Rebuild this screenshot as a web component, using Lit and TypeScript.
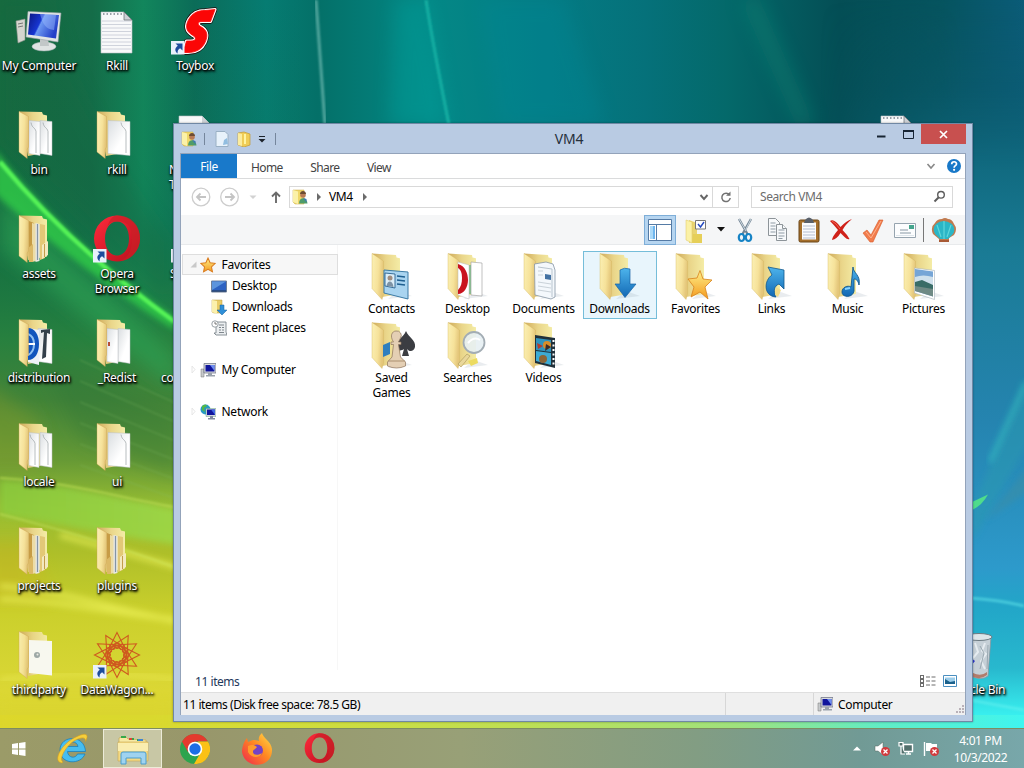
import { LitElement, html, svg, css } from "lit";
import { customElement, property } from "lit/decorators.js";

/* ---------- shared glyphs ---------- */

const arrowOverlay = svg`
  <rect x="0" y="34" width="13.5" height="13.5" fill="#e9f1fb"/>
  <path d="M4.5 36.5h7v7l-2.4-2.3c-2 1.2-2.700 2.600-2.500 5.300-2.800-2.200-3.300-5.500.2-7.800z" fill="#1d4c9c"/>`;

const gradients = svg`
  <defs>
    <linearGradient id="cover" x1="0" y1="0" x2="1" y2=".25"><stop offset="0" stop-color="#fbf0b4"/><stop offset=".6" stop-color="#f6e29a"/><stop offset="1" stop-color="#e4c67a"/></linearGradient>
    <linearGradient id="back" x1="0" y1="0" x2="1" y2="0"><stop offset="0" stop-color="#cfab5c"/><stop offset=".5" stop-color="#ead68a"/><stop offset="1" stop-color="#f4eca6"/></linearGradient>
    <linearGradient id="paper" x1="0" y1="0" x2="1" y2="1"><stop offset="0" stop-color="#d9dde0"/><stop offset=".6" stop-color="#ffffff"/></linearGradient>
    <linearGradient id="blue" x1="0" y1="0" x2="0" y2="1"><stop offset="0" stop-color="#4db4ec"/><stop offset="1" stop-color="#1268b4"/></linearGradient>
    <linearGradient id="gold" x1="0" y1="0" x2="0" y2="1"><stop offset="0" stop-color="#fff08a"/><stop offset="1" stop-color="#f39a1e"/></linearGradient>
    <linearGradient id="screen" x1="0" y1="0" x2="1" y2=".4"><stop offset="0" stop-color="#0a1680"/><stop offset=".45" stop-color="#1636d2"/><stop offset=".5" stop-color="#6c98f2"/><stop offset="1" stop-color="#2440c8"/></linearGradient>
    <linearGradient id="red" x1="0" y1="0" x2="1" y2="1"><stop offset="0" stop-color="#ff2a3c"/><stop offset="1" stop-color="#b8101c"/></linearGradient>
  </defs>`;

const icon = (size: number, body: unknown, box = 48) => html`
  <svg width=${size} height=${size} viewBox="0 0 ${box} ${box}">${gradients}${body}</svg>`;

/* Half-open folder: back panel, contents, then the cover in front. */
const openFolder = (inside: unknown) => svg`
  <path d="M4 .5 27 1l1 2.500 4 1v37L13 45z" fill="url(#back)"/>
  ${inside}
  <path d="M4 .5 13.500 5.500V36l-1.300 2v9.500L4 41z" fill="url(#cover)" stroke="#cda552" stroke-width=".4"/>`;

const libFolder = (inside: unknown) => svg`
  <path d="M30 38 44 43 20 46z" fill="#8fa0b0" opacity=".2"/>
  <path d="M4 .5 28 2l.5 2.500 3.500.8V41L14 44z" fill="url(#back)"/>
  <path d="M4 .5 15.500 8v33l-1.500 5.500L4 35.500z" fill="url(#cover)" stroke="#d5b55e" stroke-width=".4"/>
  ${inside}`;

const sheet = (x: number, right: number, fold = true) => svg`
  <path d="M${x} 9.500 L${right} 10.500V44.500L${x} 42.500z" fill="url(#paper)" stroke="#b9bfc2" stroke-width=".5"/>
  ${fold ? svg`<path d="M${right - 9} 11.500c1 6 4 4.500 5 9V42" fill="none" stroke="#9aa1a4" stroke-width=".7"/>` : null}`;

const files = svg`<path d="M14 6l5 2v38l-5 1z" fill="#c79c46"/><path d="M17 8l4 1v37l-4 1z" fill="#ecdca6"/><path d="M20.500 8l4 1v37l-4 1z" fill="#e6e6e2"/><path d="M22.500 9v36" stroke="#8494a6" stroke-width="1.200"/><path d="M25 9l5 1v33l-5 2z" fill="#e3c877"/><path d="M27 30l6-4v14l-6 4z" fill="#f3e9c0"/><path d="M29.500 29v13" stroke="#c29c4a"/><path d="M13 33l5-4v18h-4z" fill="#dcb967"/>`;

const star = "M12 1.500 15.200 8.600 22.800 9.500 17.200 14.700 18.700 22.300 12 18.500 5.300 22.300 6.800 14.700 1.200 9.500 8.800 8.600z";
const swoosh = "M44 2.500 39.500 14.500H31C26.500 14.500 26 17.500 29.500 19.500C37 23.500 37 29 34 35.500C31 42 25 45.500 17 45.500H12L15.500 34H20C25 34 26 31 22 28.500C14 24 14.500 18 18 12C21.500 6 27 3.500 34 3.500z";

const art: Record<string, unknown> = {
  computer: svg`
    <path d="M1 14 10 12v21L3 36z" fill="#d5d6cf" stroke="#8d908a" stroke-width=".6"/><path d="M3 17l5-1M3 20l5-1" stroke="#777"/>
    <ellipse cx="29" cy="39.500" rx="12" ry="4.500" fill="#dfe3e3" stroke="#9aa" stroke-width=".5"/><path d="M25 31h8l1 8h-9z" fill="#c2c7c8"/>
    <path d="M13 4.500 46 6 43 35 11 30z" fill="#e2e5e5" stroke="#98a1a6" stroke-width=".6"/><path d="M15 6.500 44 8 41 31.500 13 27.500z" fill="url(#screen)"/><path d="M25 7l16 1-2 15c-8-1-11-5-14-16z" fill="#9dbcff" opacity=".45"/>`,
  notepad: svg`
    <path d="M8 5H31L39 13V46H8z" fill="#f8f9fa" stroke="#b8bdc2" stroke-width=".6"/>
    ${[14, 17.500, 21, 24.500, 28, 31.500, 35, 38.500, 42].map(y => svg`<path d="M9 ${y}H38" stroke="#c4c9d4" stroke-width=".8"/>`)}
    <path d="M31 5v8h8z" fill="#cdd1d6" stroke="#62676d" stroke-width=".7"/><path d="M10 7h20" stroke="#9aa0a8" stroke-width="2" stroke-dasharray="1.500 2"/>`,
  plain: svg`<path d="M8 5H31L39 13V46H8z" fill="#f8f9fa" stroke="#b8bdc2" stroke-width=".6"/><path d="M31 5v8h8z" fill="#cdd1d6"/>`,
  toybox: svg`
    <g stroke-linejoin="round"><path d=${swoosh} fill="#1c0606" stroke="#1c0606" stroke-width="4.500"/>
    <path d=${swoosh} fill="#fff" stroke="#fff" stroke-width="3.200"/><path d=${swoosh} fill="#fb0606" stroke="#fb0606" stroke-width=".8"/></g>`,
  bin: openFolder(svg`${sheet(25, 37)}${sheet(14, 25)}`),
  doc: openFolder(sheet(15, 37)),
  assets: openFolder(files),
  opera: svg`<g transform="translate(0,-.5)"><path fill-rule="evenodd" d="M24 1a23 23 0 1 1 0 46a23 23 0 0 1 0-46zm0 6c-7 0-12 7-12 17s5 17 12 17 12-7 12-17S31 7 24 7z" fill="url(#red)"/><path d="M24 1c15 0 23 10 23 23S37 47 24 47c9-1 15-9 15-23S33 7 24 7c-5 0-8 2-10 6C17 4 20 1 24 1z" fill="#ca2026" opacity=".65"/></g>`,
  dist: openFolder(svg`${sheet(23, 37, false)}<path d="M26 11l9-1v5l-3-1-1 24-4 2 2-27-3 1z" fill="#34404a"/><path d="M13 9l11 2v35l-11-3z" fill="#eef2f6"/><path d="M13 9c7 0 11 7 11 16s-4 16-11 16z" fill="#1155bd"/><path d="M13 15c8 3 8 17 0 21" fill="none" stroke="#8fc0f2" stroke-width="2"/><path d="M13 25h7" stroke="#fff" stroke-width="2"/>`),
  redist: openFolder(svg`${sheet(25, 37, false)}${sheet(14, 25, false)}<path d="M15 23h2v4h-2z" fill="#b54d3a"/>`),
  locale: openFolder(svg`${sheet(25, 37)}${sheet(14, 24)}`),
  third: svg`<g opacity=".95">${openFolder(svg`<path d="M14 9 37 10V44.500L14 42z" fill="#fafafa"/><circle cx="22" cy="24" r="3" fill="#9ba6ac"/><circle cx="22.500" cy="23.500" r="1" fill="#eee"/>`)}</g>`,
  data: svg`<g fill="none" stroke="#cf5a20" stroke-width="1.100">
    ${Array.from({ length: 12 }, (_, i) => svg`<path transform="rotate(${i * 30} 24 24)" d="M24 1.500 32 17.500 24 14 16 17.500zM24 14 28.500 19"/>`)}
    ${Array.from({ length: 12 }, (_, i) => svg`<circle transform="rotate(${i * 30} 24 24)" cx="24" cy="14.500" r="2.600"/>`)}
    <circle cx="24" cy="24" r="7" stroke-dasharray="2 1.500"/></g>`,
  recycle: svg`<path d="M16 6 40 5 37 45Q30 50 20 45z" fill="#c6d0d7" stroke="#8a979f" stroke-width=".8"/><ellipse cx="28" cy="6" rx="13" ry="3.500" fill="#dde5e9" stroke="#6c7a82"/><path d="M34 12l-3 8 4 3-5 7 4 8M24 12l3 9-5 6" stroke="#eef3f6" stroke-width="2" fill="none" opacity=".8"/><path d="M37 14l-1 24M29 15l4 7-4 16" stroke="#9aa8b1" fill="none"/><path d="M22 42q8 4 14-1v3q-6 5-14 2z" fill="#b27c6c"/><path d="M16 24l8 6-5 6z" fill="#2c35cf"/>`,
  contacts: libFolder(svg`<path d="M16 17 40 19V46L16 40z" fill="#a9d4f0" stroke="#3c7ba5" stroke-width="1"/><path d="M17 20l10 1v14l-10-2z" fill="#dceef8" stroke="#28618e" stroke-width=".9"/><circle cx="22" cy="25" r="2.500" fill="#a08d80"/><path d="M18.500 33c1-6 6-6 7 1z" fill="#7d93a6"/><path d="M29 23l8 1M29 27l8 1M29 31l8 1" stroke="#1f5f90" stroke-width="1.300"/>`),
  desktop: libFolder(svg`<path d="M27 9l11 1v33l-11-1z" fill="#fff" stroke="#999" stroke-width=".6"/><path d="M14 9l11 3v34l-11-4z" fill="#fff" stroke="#b9bdbf" stroke-width=".5"/><path d="M14 11c7 2 10 9 10 16s-4 14-10 14v-4c3-3 4-7 4-12S17 17 14 15z" fill="#c9131e"/><path d="M26 12v29" stroke="#43a38c"/>`),
  documents: libFolder(svg`<path d="M14.500 11 26 9l7 2 2 6v27l-4 2-16-4z" fill="#f4f8fc" stroke="#8796a5" stroke-width=".8"/><path d="M18 14l14 2v28" fill="none" stroke="#b8c4ce"/><path d="M25 21l6 1v5l-6-1z" fill="#4472a3"/><path d="M18 18h5M18 22h5M18 29l13 2M18 33l13 2M18 37l13 2" stroke="#cad2d9"/>`),
  downloads: libFolder(svg`<path d="M24 17q4-3 10-1v15h6L29 44.500 19 31h5z" fill="url(#blue)" stroke="#1863a5" stroke-width=".7"/>`),
  favorites: libFolder(svg`<path d="M28 17.500 31 26l9 1-7 7 3 12-8-7-9 5 3-10-6-8 9-1z" fill="url(#gold)" stroke="#d8821c" stroke-width=".8"/>`),
  links: libFolder(svg`<path d="M20 14 36 17V36L31 31C26 33 25 38 28 44 15 43 16 27 24 22z" fill="url(#blue)" stroke="#10588d" stroke-width=".8"/><path d="M27 42l1-8 5 3-3 7z" fill="#f2dc88"/>`),
  music: libFolder(svg`<path d="M29 14c0 6 8 8 6 18-1-5-3-6-5-6v12c-1 7-12 7-12 1 0-5 6-7 9-5z" fill="url(#blue)" stroke="#10588d" stroke-width=".9"/><path d="M21 36l5-1" stroke="#8ad4ff" stroke-width="2"/>`),
  pictures: libFolder(svg`<path d="M14.500 15l20 2.500v29L14.500 40z" fill="#fff" stroke="#a5b2ba" stroke-width=".6"/><path d="M15 16l18 2.500v25L15 38z" fill="#76a5d6"/><path d="M15 24q8-3 18 0v9l-18-2z" fill="#cfe0ec"/><path d="M15 29l7-2 11 5v6l-18-3z" fill="#396c67"/><path d="M15 33l18 3v7.500L15 38z" fill="#6f8a85"/>`),
  games: libFolder(svg`<path d="M15 23l7-3v12l-7 3z" fill="#2f7fbe"/><path d="M38 9c3 7 10 9 9 16-1 5-6 5-8 2l2 7h-7l2-7c-4 3-8 1-8-3 0-6 7-8 10-15z" fill="#3b3d42"/><path d="M28 9a4.500 4.500 0 0 1 4.500 7l-2 4h2.500v2.500h-2.500l2 12.500 5 5v4q-9 4-18 0v-4l4.500-5 1.500-12.500H23V20h2.500C21.500 14 24 9 28 9z" fill="#e4cfb4" stroke="#8c735b" stroke-width=".7"/><path d="M20 39h17" stroke="#ab9070"/>`),
  searches: libFolder(svg`<path d="M14 42l9-10 3 2-9 11z" fill="#e9d79a" stroke="#a99558" stroke-width=".6"/><path d="M24 39l9-3 1 5-7 3z" fill="#ecdb60"/><circle cx="30" cy="20.500" r="10.500" fill="#e7f0f3" fill-opacity=".9" stroke="#a3adb4" stroke-width="1.800"/><path d="M24 21q6-7 12-3" stroke="#fff" stroke-width="2" fill="none"/>`),
  videos: libFolder(svg`<path d="M15 13l20 3v30l-20-5z" fill="#20303a"/><path d="M16 16l15 2v12l-15-2z" fill="#2f93bd"/><path d="M16 29l15 2v12l-15-4z" fill="#3cabd4"/><circle cx="27" cy="23" r="4" fill="#d98c28"/><path d="M17 21l6 3-5 3z" fill="#b13d31"/><circle cx="23" cy="37" r="4" fill="#8a6538"/><path d="M26 22l5 3-6 4z" fill="#3a2c2a"/><path d="M33.500 18v26" stroke="#fff" stroke-width="2" stroke-dasharray="2 2.500"/>`),
};

const miniPc = svg`<path d="M1 7h3v8H1z" fill="#c7cacc" stroke="#777" stroke-width=".5"/><path d="M4 1.500h12v9.500H4z" fill="#d9dbdd" stroke="#666b80" stroke-width=".7"/><path d="M5.500 3h9v6.500h-9z" fill="#10159c"/><path d="M10 3h4.500v6z" fill="#6d8df0"/><path d="M8 11h4v2h3v1.500H6V13h2z" fill="#9aa2ac"/>`;
const userFolder = svg`<path d="M1 1h11v14H3L1 13z" fill="#efd768" stroke="#c9a744" stroke-width=".5"/><path d="M1 1l5 1.500V15l-5-2z" fill="#fbf1a8"/><circle cx="11" cy="6" r="2.800" fill="#b97b55"/><path d="M8 5c0-4 6-4 6 0z" fill="#6d4c33"/><path d="M7 14.500c0-7 8-7 8.500 0z" fill="#4e9c6b"/><path d="M11 9l3.500 1v3.500z" fill="#3e79b3"/>`;

const mini: Record<string, unknown> = {
  star: svg`<g transform="scale(.667)"><path d=${star} fill="url(#gold)" stroke="#d97a1c" stroke-width="1.500"/></g>`,
  desktop: svg`<path d="M.5 3h15v11H.5z" fill="#2d62c2" stroke="#6f7f98"/><path d="M1 3.500h14L1 12z" fill="#5c94dd"/><path d="M1 13h14" stroke="#26384f"/>`,
  downloads: svg`<path d="M1 1h10v13H3l-2-1z" fill="#e9cc66" stroke="#b9993f" stroke-width=".5"/><path d="M1 1l5 1v13l-5-2z" fill="#fbf0ac"/><path d="M9 6h4v5h3l-5 5-5-5h3z" fill="#2f8fd8" stroke="#17629f" stroke-width=".5"/>`,
  recent: svg`<path d="M5 2h10v10l1 3H5l-2-2h2z" fill="#eceff1" stroke="#7e868c" stroke-width=".9"/><path d="M8 5h5M8 7.500h2m1 0h2M8 10h2m1 0h2M8 12.500h5" stroke="#7e868c"/><circle cx="4" cy="4" r="3.200" fill="#fff" stroke="#8d969c" stroke-width=".9"/><path d="M4 2v2h2" stroke="#555" fill="none" stroke-width=".8"/>`,
  pc: miniPc,
  net: svg`<circle cx="5.500" cy="5.500" r="5" fill="#2799c4"/><path d="M2 2q4-3 5 0l-3 2 1 4-3-2z" fill="#54b846"/><path d="M6 4.500h10v8H6z" fill="#d3d6e0" stroke="#596" stroke-width=".4"/><path d="M7 5.500h8V11H7z" fill="#10159c"/><path d="M11 5.500h4V11z" fill="#4167e4"/><path d="M10 12h3v2h2v1.500H8V14h2z" fill="#818aa0"/>`,
  user: userFolder,
};

/* ---------- wallpaper ---------- */

@customElement("aurora-wallpaper")
class AuroraWallpaper extends LitElement {
  static styles = css`:host { display: block; } svg { display: block; }`;
  render() {
    return html`<svg width="1024" height="768" viewBox="0 0 1024 768" preserveAspectRatio="none">
      <defs>
        <linearGradient id="sky"><stop offset="0" stop-color="#166b3f"/><stop offset=".09" stop-color="#146c48"/><stop offset=".14" stop-color="#12865c"/><stop offset=".19" stop-color="#0b6c58"/><stop offset=".26" stop-color="#067c72"/><stop offset=".31" stop-color="#047068"/><stop offset=".42" stop-color="#048886"/><stop offset=".53" stop-color="#047c84"/><stop offset=".63" stop-color="#05717a"/><stop offset=".71" stop-color="#04696a"/><stop offset=".82" stop-color="#044e55"/><stop offset=".92" stop-color="#06545f"/><stop offset="1" stop-color="#0b5c78"/></linearGradient>
        <linearGradient id="field" x1="0" y1="0" x2="0" y2="1"><stop offset="0" stop-color="#137246" stop-opacity="0"/><stop offset=".28" stop-color="#127545" stop-opacity=".2"/><stop offset=".44" stop-color="#27803f"/><stop offset=".52" stop-color="#418338"/><stop offset=".6" stop-color="#679a35"/><stop offset=".66" stop-color="#97bd33"/><stop offset=".72" stop-color="#aebf29"/><stop offset=".8" stop-color="#cbd02c"/><stop offset=".9" stop-color="#dbd736"/><stop offset="1" stop-color="#d2ce2c"/></linearGradient>
        <linearGradient id="sea" x1="0" y1="0" x2="0" y2="1"><stop offset="0" stop-color="#0a566a" stop-opacity="0"/><stop offset=".12" stop-color="#0c5c70" stop-opacity=".45"/><stop offset=".22" stop-color="#116b81"/><stop offset=".33" stop-color="#1a7b95"/><stop offset=".55" stop-color="#2584b0"/><stop offset=".74" stop-color="#2d9acb"/><stop offset=".79" stop-color="#22a6c8"/><stop offset=".87" stop-color="#28b8ce"/><stop offset=".93" stop-color="#38eeee"/><stop offset=".96" stop-color="#43f6ef"/></linearGradient>
        <linearGradient id="fade"><stop offset="0" stop-color="#000"/><stop offset=".7" stop-color="#fff"/></linearGradient>
        <mask id="side"><rect x="820" width="204" height="768" fill="url(#fade)"/></mask>
        <linearGradient id="floor"><stop offset="0" stop-color="#ddd72b"/><stop offset=".25" stop-color="#d4dc36"/><stop offset=".5" stop-color="#bfdf52"/><stop offset=".72" stop-color="#9fe27d"/><stop offset=".86" stop-color="#61edc5"/><stop offset="1" stop-color="#3ff5ef"/></linearGradient>
        <linearGradient id="meadow" x1="0" y1="0" x2="1" y2="0"><stop offset="0" stop-color="#8ccc3c"/><stop offset="1" stop-color="#9ddb4b"/></linearGradient>
        <filter id="b1"><feGaussianBlur stdDeviation="1"/></filter>
        <filter id="b3"><feGaussianBlur stdDeviation="3"/></filter>
        <filter id="b9" x="-50%" y="-50%" width="200%" height="200%"><feGaussianBlur stdDeviation="9"/></filter>
      </defs>
      <rect width="1024" height="768" fill="url(#sky)"/>
      <rect width="300" height="768" fill="url(#field)"/>
      <rect x="820" width="204" height="768" fill="url(#sea)" mask="url(#side)"/>
      <path d="M0 0V140L170 300V240C130 190 60 70 50 0z" fill="#126440" opacity=".3" filter="url(#b9)"/>
      <path d="M0 195 175 355V390L0 250z" fill="#2fa455" opacity=".6" filter="url(#b9)"/>
      <path d="M-5 150C30 195 90 260 175 318V330C110 290 40 235-5 194z" fill="#35db49" opacity=".7" filter="url(#b3)"/>
      <path d="M0 162C50 222 110 275 175 322" stroke="#54f357" stroke-width="4.500" fill="none" filter="url(#b1)"/>
      <path d="M30 340C70 370 120 395 180 415V480L80 440z" fill="#2d7537" opacity=".35" filter="url(#b9)"/>
      <path d="M-20 380 40 420V470H-20z" fill="#8a9e2c" opacity=".4" filter="url(#b9)"/>
      ${[0, 1, 2, 3, 4, 5].map(i => svg`<path d="M80 ${360 + i * 21} 180 ${405 + i * 19}" stroke="#85be68" opacity=".4" filter="url(#b1)"/>`)}
      <path d="M0 480C70 484 120 500 180 510V545C110 535 70 525 0 515z" fill="url(#meadow)" opacity=".8" filter="url(#b3)"/>
      <path d="M0 478C70 482 120 498 180 508M0 514C60 530 100 540 180 569" stroke="#bada52" stroke-width="2" fill="none" opacity=".7" filter="url(#b1)"/>
      <path d="M-20 540H30L50 600H-20z" fill="#d6ae1e" opacity=".3" filter="url(#b9)"/>
      <path d="M0 586C60 590 120 610 180 622M0 599C60 600 120 615 180 620M60 535 180 568" stroke="#eef35a" stroke-width="5" fill="none" opacity=".7" filter="url(#b3)"/>
      <path d="M0 680Q90 668 180 680" stroke="#eeee60" stroke-width="4" fill="none" opacity=".6" filter="url(#b3)"/>
      <path d="M316 0 325 125" stroke="#7cc2b9" stroke-width="3" opacity=".65" filter="url(#b1)"/>
      <path d="M426 0Q432 40 449 125" stroke="#1bb3a5" stroke-width="3" fill="none" filter="url(#b1)"/>
      <path d="M395 0H427L449 125H390z" fill="#05a29d" opacity=".4" filter="url(#b9)"/>
      <path d="M565 0 605 125H500L480 0z" fill="#06899a" opacity=".3" filter="url(#b9)"/>
      <path d="M740 0 796 125H815L760 0z" fill="#088674" opacity=".45" filter="url(#b9)"/>
      <path d="M1030 375 973 505V540L1030 440z" fill="#2999b0" opacity=".55" filter="url(#b3)"/>
      <path d="M1026 382 990 462" stroke="#3bcfc5" stroke-width="4" opacity=".65" filter="url(#b3)"/>
      <path d="M1030 465 985 520 1030 490z" fill="#3f8ea0" opacity=".5" filter="url(#b3)"/>
      <path d="M970 503 988 494.500Q982 506 970 511z" fill="#4fdc8c"/>
      <path d="M970 598Q1000 600 1024 606M970 700 1024 710" stroke="#6ff4f2" stroke-width="3" opacity=".45" fill="none" filter="url(#b1)"/>
      <rect y="715" width="1024" height="53" fill="url(#floor)"/>
      <rect x="-10" y="690" width="186" height="50" fill="#ddd72b" opacity=".4" filter="url(#b9)"/>
    </svg>`;
  }
}

/* ---------- desktop ---------- */

interface Shortcut { art?: string; label: string; second?: string; col: number; row: number; link?: boolean; edge?: number }

/* "edge" entries sit under the window; only the start of the label peeks out. */
const shortcuts: Shortcut[] = [
  { art: "computer", label: "My Computer", col: 1, row: 1 },
  { art: "bin", label: "bin", col: 1, row: 2 },
  { art: "assets", label: "assets", col: 1, row: 3 },
  { art: "dist", label: "distribution", col: 1, row: 4 },
  { art: "locale", label: "locale", col: 1, row: 5 },
  { art: "assets", label: "projects", col: 1, row: 6 },
  { art: "third", label: "thirdparty", col: 1, row: 7 },
  { art: "notepad", label: "Rkill", col: 2, row: 1 },
  { art: "doc", label: "rkill", col: 2, row: 2 },
  { art: "opera", label: "Opera", second: "Browser", col: 2, row: 3, link: true },
  { art: "redist", label: "_Redist", col: 2, row: 4 },
  { art: "doc", label: "ui", col: 2, row: 5 },
  { art: "assets", label: "plugins", col: 2, row: 6 },
  { art: "data", label: "DataWagon...", col: 2, row: 7, link: true },
  { art: "toybox", label: "Toybox", col: 3, row: 1, link: true },
  { art: "plain", label: "N", second: "T", col: 3, row: 2, edge: 13 },
  { label: "S", col: 3, row: 3, link: true, edge: 14 },
  { label: "co", col: 3, row: 4, edge: 5 },
  { art: "notepad", label: "", col: 12, row: 2 },
  { art: "recycle", label: "Recycle Bin", col: 13, row: 7 },
];

@customElement("desktop-icons")
class DesktopIcons extends LitElement {
  static styles = css`
    :host { display: grid; grid-template-columns: repeat(13, 78px); grid-template-rows: repeat(7, 104px); font: 12px/15px "Noto Sans", "Open Sans", sans-serif; }
    .cell { display: flex; flex-direction: column; align-items: center; padding-top: 7px; gap: 3px; }
    .label { display: flex; flex-direction: column; align-items: center; white-space: nowrap; color: #fff; letter-spacing: -.25px; text-shadow: 1px 1px 2px #000, 0 1px 2px #000, 1px 2px 3px #000; }
    .label.edge { align-self: flex-start; align-items: flex-start; }
    svg { display: block; flex: none; }
  `;
  render() {
    return shortcuts.map(s => html`
      <div class="cell" style="grid-column:${s.col};grid-row:${s.row}">
        ${icon(48, svg`${s.art ? art[s.art] : null}${s.link ? arrowOverlay : null}`)}
        <div class="label ${s.edge ? "edge" : ""}" style="padding-left:${s.edge ?? 0}px"><span>${s.label}</span>${s.second ? html`<span>${s.second}</span>` : null}</div>
      </div>`);
  }
}

/* ---------- explorer window ---------- */

@customElement("explorer-window")
class ExplorerWindow extends LitElement {
  @property() selected = "Downloads";

  static styles = css`
    :host { display: flex; flex-direction: column; box-sizing: border-box; background: #b9cbe3; border: 1px solid #7088a4; padding: 0 6px 6px; font: 12px/15px "Noto Sans", "Open Sans", sans-serif; letter-spacing: -.25px; color: #000; box-shadow: 0 0 2px rgba(0,0,0,.35); }
    svg { display: block; flex: none; }
    .title { display: grid; grid-template-columns: 1fr auto 1fr; height: 29px; align-items: center; }
    .quick { display: flex; align-items: center; gap: 7px; padding-left: 1px; }
    .quick .bar:nth-child(2) { margin-right: 2px; }
    .quick .bar:last-child { margin-left: 2px; }
    .bar { width: 1px; height: 12px; background: #75869c; }
    .name { font-size: 14px; letter-spacing: -.2px; color: #26303c; padding-right: 8px; }
    .buttons { display: flex; justify-content: flex-end; align-self: start; align-items: center; }
    .close { width: 45px; height: 20px; background: #c8504f; display: grid; place-items: center; }
    .buttons .min { margin-right: 17px; } .buttons .max { margin-right: 7px; }
    .client { flex: 1; display: flex; flex-direction: column; background: #fff; border: 1px solid #93a3ba; border-bottom: 0; min-height: 0; }
    .tabs { display: flex; height: 24px; align-items: center; border-bottom: 1px solid #dadbdc; color: #444; letter-spacing: -.6px; padding-right: 4px; }
    .tab { padding: 2px 13.500px 0 14px; }
    .file { align-self: stretch; width: 56px; display: grid; place-items: center; background: #1979ca; color: #fff; letter-spacing: -.4px; }
    .grow { flex: 1; }
    .tabs svg + svg { margin-left: 11px; }
    .address { display: flex; align-items: center; height: 36px; padding: 0 12px 1px 9px; box-sizing: border-box; }
    .crumbs { flex: 1; display: flex; align-items: center; height: 20px; border: 1px solid #d9d9d9; margin-left: 4px; padding-left: 2px; }
    .crumbs span { padding: 0 9px 0 7px; letter-spacing: -.4px; }
    .crumbs .sep { margin-left: 8px; }
    .refresh { width: 25px; align-self: stretch; border-left: 1px solid #d9d9d9; display: grid; place-items: center; margin-left: 3px; }
    .search { width: 186px; height: 20px; border: 1px solid #d9d9d9; display: flex; align-items: center; justify-content: space-between; padding: 0 6px 0 8px; margin-left: 12px; color: #6d6d6d; letter-spacing: -.42px; }
    .tools { display: flex; align-items: center; height: 30px; box-sizing: border-box; background: #f5f6f7; border-bottom: 1px solid #e8eaec; justify-content: flex-end; padding-right: 5px; }
    .tool { width: 32px; height: 30px; display: grid; place-items: center; }
    .tool.on { background: #b6d5f0; border: 1px solid #7eaed8; box-sizing: border-box; }
    .tool.wide { width: 37px; }
    .drop { width: 16px; display: grid; place-items: center; }
    .toolbar-line { width: 1px; height: 24px; background: #777; margin: 0 4px 0 2px; }
    .body { flex: 1; display: flex; min-height: 0; }
    .nav { width: 156px; padding-top: 9px; border-right: 1px solid #f7f7f7; display: flex; flex-direction: column; }
    .row { height: 21px; display: flex; align-items: center; box-sizing: border-box; padding-left: 8.500px; gap: 4.500px; }
    .row svg:first-child:not(:nth-last-child(2)) { margin-right: -1px; }
    .row svg:nth-child(2) { margin-right: 1px; }
    .row.head { background: #f7f7f7; border: 1px solid #dedede; margin-left: 1px; margin-right: -1px; padding-left: 6.500px; }
    .row.child { padding-left: 30px; gap: 5px; }
    .row.space { margin-top: 21px; }
    .row span { letter-spacing: -.25px; }
    .items { flex: 1; display: grid; grid-template-columns: repeat(8, 74px); grid-auto-rows: 68px; gap: 1px 2px; padding: 6px 0 0 17px; align-content: start; }
    .item { box-sizing: border-box; border: 1px solid transparent; display: flex; flex-direction: column; align-items: center; padding-top: 1px; }
    .item svg { margin-left: -1px; }
    .item.on { background: #e8f5fc; border-color: #75bdd9; }
    .caption { text-align: center; line-height: 15px; width: min-content; margin-left: -1px; }
    .summary { height: 22px; display: flex; align-items: center; justify-content: space-between; padding: 0 8px 0 14px; color: #1e395b; letter-spacing: -.45px; }
    .views { display: flex; gap: 7px; }
    .status { height: 23px; box-sizing: border-box; background: #f0f0f0; border-top: 1px solid #dfdfdf; display: grid; grid-template-columns: 545px 88px 1fr; letter-spacing: -.46px; align-items: stretch; }
    .pane { display: flex; align-items: center; padding-left: 2px; gap: 5px; border-right: 1px solid #d7d7d7; box-sizing: border-box; }
    .pane:last-child { padding-left: 3px; border: 0; letter-spacing: -.3px; }
    .grip { align-self: flex-end; margin: 0 1px 1px auto; }
  `;

  private names: [string, string][] = [
    ["contacts", "Contacts"], ["desktop", "Desktop"], ["documents", "Documents"], ["downloads", "Downloads"],
    ["favorites", "Favorites"], ["links", "Links"], ["music", "Music"], ["pictures", "Pictures"],
    ["games", "Saved Games"], ["searches", "Searches"], ["videos", "Videos"],
  ];

  private folderOptions = svg`<path d="M5 4l8 3v18l-8 2z" fill="#e9d471"/><path d="M2 4l6 2v21l-6-3z" fill="#fbf1a6" stroke="#dcc55c" stroke-width=".5"/><path d="M9 18h9v9H8z" fill="#e6cf58"/><path d="M11.500 4.500h10v8.500h-10z" fill="#fff" stroke="#777"/><path d="M14 8l2.500 3L20 6" fill="none" stroke="#2348c0" stroke-width="1.400"/>`;

  private command(body: unknown) { return html`<div class="tool"><svg width="26" height="26" viewBox="0 0 26 26">${gradients}${body}</svg></div>`; }

  render() {
    return html`
      <div class="title">
        <div class="quick">
          ${icon(16, mini.user, 16)}<div class="bar"></div>
          <svg width="16" height="18" viewBox="0 0 16 18"><path d="M2 1.500h9l3 3v12H2z" fill="#e8f2fb" stroke="#9ab0c4"/><path d="M10 10l3-2 1 6-5 1z" fill="#91bde0"/></svg>
          <svg width="14" height="16" viewBox="0 0 14 16"><path d="M1 2l6-1 6 2v11l-6 2-6-2z" fill="#f0cd56" stroke="#c29934" stroke-width=".7"/><path d="M1 2l4 1v12l-4-1z" fill="#fbec9e"/><path d="M8 3v10" stroke="#fff4a0" stroke-width="2"/></svg>
          <svg width="8" height="8" viewBox="0 0 8 8"><path d="M1 1.500h6" stroke="#1c232b"/><path d="M.5 4h7L4 7.500z" fill="#1c232b"/></svg>
          <div class="bar"></div>
        </div>
        <div class="name">VM4</div>
        <div class="buttons">
          <svg class="min" width="9" height="20" viewBox="0 0 9 20"><path d="M0 12.500h8.500" stroke="#172433" stroke-width="2"/></svg>
          <svg class="max" width="11" height="20" viewBox="0 0 11 20"><path d="M.5 6.500h10v8H.5z" fill="none" stroke="#172433"/><path d="M0 7h11" stroke="#172433" stroke-width="2"/></svg>
          <div class="close"><svg width="9" height="9" viewBox="0 0 9 9"><path d="M1 1l7 7M8 1 1 8" stroke="#fff" stroke-width="1.700"/></svg></div>
        </div>
      </div>
      <div class="client">
        <div class="tabs">
          <div class="file">File</div><div class="tab">Home</div><div class="tab">Share</div><div class="tab">View</div><div class="grow"></div>
          <svg width="10" height="8" viewBox="0 0 10 8"><path d="M1.500 2 5 6l3.500-4" fill="none" stroke="#888" stroke-width="1.600"/></svg>
          <svg width="14" height="14" viewBox="0 0 14 14"><circle cx="7" cy="7" r="7" fill="#1878c8"/><path d="M4.700 5.200C4.700 2 9.600 2 9.500 5c0 1.700-2.400 1.700-2.400 3.700" fill="none" stroke="#fff" stroke-width="1.700"/><circle cx="7.100" cy="10.800" r="1.100" fill="#fff"/></svg>
        </div>
        <div class="address">
          <svg width="95" height="22" viewBox="0 0 95 22">
            <g fill="none" stroke="#cdcdcd" stroke-width="1.300"><circle cx="11" cy="11" r="8.800"/><circle cx="39.500" cy="11" r="8.800"/></g>
            <path d="M16 11H7M10.500 7.500 7 11l3.500 3.500M35 11h9M40.500 7.500 44 11l-3.500 3.500" fill="none" stroke="#c4c4c4" stroke-width="1.800"/>
            <path d="M59.500 9.500h7L63 13z" fill="#d2d2d2"/>
            <path d="M86 17V7M82 10.500 86 6.500l4 4" fill="none" stroke="#6b6b6b" stroke-width="1.900"/>
          </svg>
          <div class="crumbs">
            ${icon(16, mini.user, 16)}
            <svg class="sep" width="6" height="8" viewBox="0 0 6 8"><path d="M1 0l4 4-4 4z" fill="#6b6b6b"/></svg><span>VM4</span>
            <svg width="6" height="8" viewBox="0 0 6 8"><path d="M1 0l4 4-4 4z" fill="#6b6b6b"/></svg><div class="grow"></div>
            <svg width="10" height="8" viewBox="0 0 10 8"><path d="M1.500 2 5 6l3.500-4" fill="none" stroke="#666" stroke-width="1.900"/></svg>
            <div class="refresh"><svg width="12" height="12" viewBox="0 0 12 12"><path d="M9.500 4A4.200 4.200 0 1 0 10.200 7" fill="none" stroke="#727272" stroke-width="1.500"/><path d="M6 4.700h4.500V.5z" fill="#727272"/></svg></div>
          </div>
          <div class="search">Search VM4<svg width="13" height="13" viewBox="0 0 13 13"><circle cx="8" cy="4.800" r="3.300" fill="none" stroke="#5c5c5c" stroke-width="1.400"/><path d="M5.500 7.500 1.500 11.500" stroke="#5c5c5c" stroke-width="2"/></svg></div>
        </div>
        <div class="tools">
          <div class="tool on"><svg width="24" height="22" viewBox="0 0 24 22"><path d="M.5.500h23v21H.5z" fill="#fff" stroke="#557ba5"/><path d="M.5 5.500h23M8.500 5.500v16" stroke="#557ba5"/><path d="M2 7h5v13H2z" fill="#6fb6ee"/><path d="M2 7h3v13H2z" fill="#abd9f8"/></svg></div>
          <div class="tool wide"><svg width="22" height="28" viewBox="0 0 22 28">${this.folderOptions}</svg></div>
          <div class="drop"><svg width="8" height="5" viewBox="0 0 8 5"><path d="M0 0h8L4 4.500z" fill="#111"/></svg></div>
          ${this.command(svg`<path d="M7 2 16 18M19 2 10 18" stroke="#718494" stroke-width="2.400"/><path d="M7 2l7 12M19 2l-5 10" stroke="#d1dbe1"/><g fill="none" stroke="#1683c5" stroke-width="2.200"><ellipse cx="9.500" cy="20.500" rx="2.700" ry="3.500"/><ellipse cx="16.500" cy="20.500" rx="2.700" ry="3.500"/></g>`)}
          ${this.command(svg`<g fill="#f7f9fb" stroke="#8d9499"><path d="M4.500 1.500h7l4 4v13h-11z"/><path d="M12.500 7.500h6l4 4v12h-10z"/><path d="M18.500 7.500v4h4"/></g><path d="M6.500 6h5M6.500 9h5M6.500 12h5M6.500 15h5M14.500 13h6M14.500 16h6M14.500 19h6M14.500 21.500h4" stroke="#8f9ba5"/>`)}
          ${this.command(svg`<rect x="3" y="3" width="20" height="22" rx="1.500" fill="#a56f2b" stroke="#6b4618"/><path d="M6 5.500h14v17H6z" fill="#fafbfd"/><path d="M9 3q4-5 8 0l1 3H8z" fill="#59606a"/><path d="M7 9h12M7 12h12M7 15h12M7 18h12M7 21h12" stroke="#b5bed0"/>`)}
          ${this.command(svg`<path d="M2 4Q6 1 12.500 10 18 4 24 2 17 8 14.500 13q5 5 7 9-2 1-5-2l-4-4Q9 22 4 23q0-3 6-10Q5 7 2 4z" fill="#cf2119"/><path d="M4 4q4 2 8 8" stroke="#f46853" fill="none"/>`)}
          ${this.command(svg`<path d="M3 16l4-3 4 5L19 3h4L13 25H10z" fill="#f17c4c" stroke="#d95a28" stroke-width=".6"/><path d="M6 15l5 6L21 4" fill="none" stroke="#ffb18c"/>`)}
          ${this.command(svg`<path d="M2.500 6.500h21v14h-21z" fill="#fcfdfe" stroke="#96a4af"/><path d="M17 8h5v4h-5z" fill="#44a58d"/><path d="M8 13h8M8 16h11" stroke="#8898a4"/><path d="M4 18.500h18" stroke="#dde5ea"/>`)}
          <div class="toolbar-line"></div>
          ${this.command(svg`<path d="M8 22 2 17Q-1 10 4 6q2-4 7-4 3-2 6 0 4 0 6 5 4 5 0 11l-5 3v3H8z" fill="#c07a4e"/><path d="M9 22 4 17Q1 11 5 7q7-6 16 0 4 5 1 10l-5 5z" fill="#2bb6c6"/><path d="M13 22V4M10 20 6 8M16 20l4-12" stroke="#5fd6da" stroke-width="1.200"/><path d="M8 24h10" stroke="#a85a35" stroke-width="2"/>`)}
        </div>
        <div class="body">
          <div class="nav">
            <div class="row head"><svg width="7" height="7" viewBox="0 0 7 7"><path d="M6.500.5v6h-6z" fill="#c9c9c9"/></svg>${icon(16, mini.star, 16)}<span>Favorites</span></div>
            <div class="row child">${icon(16, mini.desktop, 16)}<span>Desktop</span></div>
            <div class="row child">${icon(16, mini.downloads, 16)}<span>Downloads</span></div>
            <div class="row child">${icon(16, mini.recent, 16)}<span>Recent places</span></div>
            <div class="row space"><svg width="7" height="9" viewBox="0 0 7 9"><path d="M2 1l3 3.500L2 8z" fill="none" stroke="#e6e6e6"/></svg>${icon(16, mini.pc, 16)}<span>My Computer</span></div>
            <div class="row space"><svg width="7" height="9" viewBox="0 0 7 9"><path d="M2 1l3 3.500L2 8z" fill="none" stroke="#e6e6e6"/></svg>${icon(16, mini.net, 16)}<span>Network</span></div>
          </div>
          <div class="items">${this.names.map(([a, n]) => html`
            <div class="item ${n === this.selected ? "on" : ""}">${icon(48, art[a])}<div class="caption">${n}</div></div>`)}
          </div>
        </div>
        <div class="summary">11 items
          <div class="views">
            <svg width="16" height="13" viewBox="0 0 16 13"><g fill="none" stroke="#6c6c6c"><rect x=".5" y=".5" width="3" height="3"/><rect x=".5" y="4.500" width="3" height="3"/><rect x=".5" y="8.500" width="3" height="3"/></g><path d="M6 2h10M6 6h10M6 10h10" stroke="#6c6c6c" stroke-dasharray="4 1.500"/></svg>
            <svg width="14" height="12" viewBox="0 0 14 12"><path d="M.5.500h13v11H.5z" fill="#fff" stroke="#4b8fc0"/><path d="M2 2.500h10V9H2z" fill="#9ccdea"/><path d="M2 4l5 3 5-1v3H2z" fill="#1b618c"/></svg>
          </div>
        </div>
        <div class="status">
          <div class="pane">11 items (Disk free space: 78.5 GB)</div><div class="pane"></div>
          <div class="pane">${icon(16, mini.pc, 16)}<span>Computer</span>
            <svg class="grip" width="9" height="9" viewBox="0 0 9 9"><path d="M7 1h2M4 4h2M7 4h2M1 7h2M4 7h2M7 7h2" stroke="#b9b1b8" stroke-width="1.800"/></svg></div>
        </div>
      </div>`;
  }
}

/* ---------- taskbar ---------- */

@customElement("task-bar")
class TaskBar extends LitElement {
  static styles = css`
    :host { display: flex; box-sizing: border-box; align-items: center; background: linear-gradient(90deg, #9b9b68 0%, #98976b 20%, #98a077 45%, #829d83 68%, #719a95 84%, #78a7aa 100%); border-top: 1px solid #7d8c62; font: 12px/17px "Noto Sans", "Open Sans", sans-serif; color: #fff; }
    svg { display: block; }
    .start { width: 41px; padding-left: 12px; box-sizing: border-box; }
    .app { width: 62px; height: 100%; display: grid; place-items: center; }
    .app.active { width: 59px; background: #c8c7a5; border: 1px solid #ecebd8; box-sizing: border-box; margin: 0 2px 0 0; }
    .tray { margin-left: auto; display: flex; align-items: center; gap: 8.500px; }
    .clock { width: 77px; text-align: center; letter-spacing: -.4px; margin-left: -5px; padding-right: 5px; }
  `;
  private bad = svg`<circle cx="11.500" cy="10.500" r="4.500" fill="#d23a3d"/><path d="M9.500 8.500l4 4M13.500 8.500l-4 4" stroke="#fff" stroke-width="1.300"/>`;
  render() {
    return html`
      <div class="start"><svg width="14" height="14" viewBox="0 0 14 14"><path d="M0 2l6-1v5.500H0zM7 .900 13.500 0v6.500H7zM0 7.500h6V13l-6-1zM7 7.500h6.500V14L7 13.100z" fill="#fff"/></svg></div>
      <div class="app"><svg width="32" height="32" viewBox="0 0 32 32"><path d="M29.500 18.500H11.500c.5 6.500 8 7.500 10 2.500h7.500C25 32 4 32 4 17S28.500 1 29.500 18.500zM22 13.500c-1-6-9.500-6-10.500 0z" fill="#46bdf0" stroke="#1a80bd" stroke-width=".8" fill-rule="evenodd"/><path d="M6 30C-4 29 5 12 17 5.500S34 0 29.500 8.500C30 3.500 25 4 18 8S2 26 7 29z" fill="#f5cf3c" stroke="#d69e1c" stroke-width=".6"/></svg></div>
      <div class="app active"><svg width="34" height="32" viewBox="0 0 34 32"><path d="M3 5l6-2 3 3 18 1v20H3z" fill="#f7e9a4" stroke="#c9aa50" stroke-width=".7"/><path d="M5 4h5M13 6h5M21 7h5" stroke="#35a84a" stroke-width="2"/><path d="M13 6h3" stroke="#e24136" stroke-width="2"/><path d="M22 7h5" stroke="#3f84d1" stroke-width="2"/><path d="M2 9h30v19H2z" fill="#f3d984" stroke="#c9aa50" stroke-width=".6"/><path d="M2 10h30v8H2z" fill="#faedaf"/><path d="M5 31V21q0-2 2-2h21q2 0 2 2v10h-5v-6H10v6z" fill="#9fd3f0" stroke="#4b9dce"/></svg></div>
      <div class="app"><svg width="30" height="30" viewBox="0 0 30 30"><circle cx="15" cy="15" r="15" fill="#2da44e"/><path d="M2 7.500A15 15 0 0 1 28 7.500H15L8 18z" fill="#e33b2e"/><path d="M28 7.500A15 15 0 0 1 14 30L21 18 18 7.500z" fill="#fbc116"/><circle cx="15" cy="15" r="7.300" fill="#fff"/><circle cx="15" cy="15" r="5.700" fill="#1d6ee4"/></svg></div>
      <div class="app"><svg width="32" height="32" viewBox="0 0 32 32"><defs><linearGradient id="fox" x1="1" y1="0" x2="0" y2="1"><stop offset="0" stop-color="#ffe04a"/><stop offset=".45" stop-color="#ff8a22"/><stop offset="1" stop-color="#ef234e"/></linearGradient></defs><path d="M21 0c1 5 9 8 10 16 1 20-27 21-30 3C1 14 3 8 6 5l1 4 5-2c3 0 5 1 6 1-1-4 1-6 3-8z" fill="url(#fox)"/><circle cx="16" cy="17.500" r="6" fill="#7443c4"/><path d="M7 13c4-2 7-1 9 1-2 3-4 2-4 5 0 3 5 4 9 1-2 6-11 5-14-1z" fill="#ff9b2c"/></svg></div>
      <div class="app">${icon(31, art.opera)}</div>
      <div class="tray">
        <svg width="8" height="5" viewBox="0 0 8 5"><path d="M0 4.500 4 .5l4 4z" fill="#fff"/></svg>
        <svg width="16" height="16" viewBox="0 0 16 16" style="margin-left:4px"><path d="M1 5h3l5-4v13l-5-4H1z" fill="#fff" stroke="#56645f" stroke-width=".5"/>${this.bad}</svg>
        <svg width="16" height="16" viewBox="0 0 16 16"><path d="M5.500 3.500h9v7h-9zM8 13h5M10.500 10.500V13" fill="#526f6c" stroke="#fff" stroke-width="1.400"/><path d="M1 1.500h4v3.500H1zM3 5v8h4" fill="#526f6c" stroke="#fff" stroke-width="1.200"/></svg>
        <svg width="16" height="16" viewBox="0 0 16 16"><path d="M1.500 1v14" stroke="#fff" stroke-width="1.400"/><path d="M3 2h5l1 1h5v7H3z" fill="#fff"/>${this.bad}</svg>
        <div class="clock">4:01 PM<br>10/3/2022</div>
      </div>`;
  }
}

@customElement("app-root")
class AppRoot extends LitElement {
  static styles = css`
    :host { display: block; position: relative; width: 1024px; height: 768px; overflow: hidden; }
    aurora-wallpaper, desktop-icons { position: absolute; left: 0; top: 0; }
    explorer-window { position: absolute; left: 173px; top: 123px; width: 800px; height: 599px; }
    task-bar { position: absolute; left: 0; right: 0; bottom: 0; height: 40px; }
  `;
  render() {
    return html`<aurora-wallpaper></aurora-wallpaper><desktop-icons></desktop-icons><explorer-window></explorer-window><task-bar></task-bar>`;
  }
}
